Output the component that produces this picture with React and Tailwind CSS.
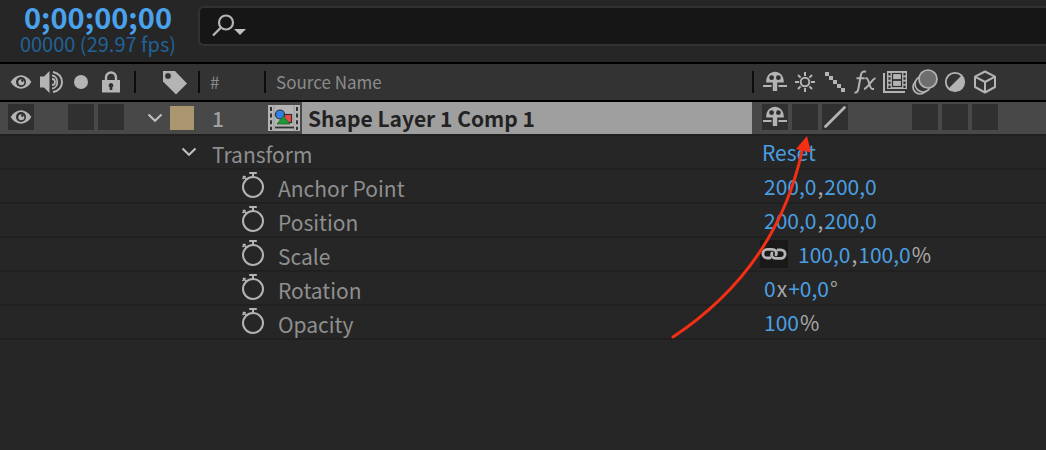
import React from "react";

function Eye() {
  return (
    <svg width="22" height="16" viewBox="0 0 22 16" aria-hidden="true">
      <path d="M0.6 8C6.2-1 15.8-1 21.4 8 15.8 17 6.2 17 0.6 8Z" fill="#b4b4b4" />
      <circle cx="11" cy="8" r="5" fill="#2e2e2e" />
      <circle cx="11.3" cy="8.2" r="3" fill="#b4b4b4" />
      <circle cx="12.4" cy="6.6" r="1.3" fill="#2e2e2e" />
    </svg>
  );
}

function Speaker() {
  return (
    <svg width="24" height="24" viewBox="0 0 24 24" aria-hidden="true">
      <path d="M1 6.5H5L10.5 1V23L5 17.5H1Z" fill="#b4b4b4" />
      <path d="M13 9A3 3 0 0 1 13 15" fill="none" stroke="#b4b4b4" strokeWidth="1.8" />
      <path d="M13 5.5C20 6 20 18 13 18.5" fill="none" stroke="#b4b4b4" strokeWidth="1.8" />
      <path d="M14 2C26 4 26 20 14 22" fill="none" stroke="#b4b4b4" strokeWidth="2" />
    </svg>
  );
}

function Lock() {
  return (
    <svg width="20" height="22" viewBox="0 0 20 22" aria-hidden="true">
      <path d="M5 10V6.5a5 5 0 0 1 10 0V10" fill="none" stroke="#b4b4b4" strokeWidth="2.4" />
      <rect x="1" y="9" width="18" height="12.5" fill="#b4b4b4" />
      <path d="M10 12a2.4 2.4 0 0 1 1.3 4.4V19H8.7V16.4A2.4 2.4 0 0 1 10 12Z" fill="#303030" />
    </svg>
  );
}

function Tag() {
  return (
    <svg width="26" height="25" viewBox="0 0 26 25" aria-hidden="true">
      <path d="M1 1H13L25 13.5 14 24.5 1 11.5Z" fill="#b4b4b4" />
      <circle cx="6" cy="6" r="3" fill="#333" stroke="#777" strokeWidth="0.6" />
    </svg>
  );
}

function Shy() {
  return (
    <svg width="24" height="22" viewBox="0 0 24 22" aria-hidden="true">
      <path d="M3.2 11.5C2.7-2.8 21.3-2.8 20.8 11.5H14.2V20H9.8V11.5Z" fill="#b4b4b4" />
      <circle cx="8.6" cy="6.7" r="2.4" fill="#2e2e2e" />
      <circle cx="15.4" cy="6.7" r="2.4" fill="#2e2e2e" />
      <path d="M0 15H8.5M15.5 15H24" stroke="#b4b4b4" strokeWidth="2" />
    </svg>
  );
}

function Sun() {
  return (
    <svg width="20" height="20" viewBox="0 0 20 20" fill="none" stroke="#b4b4b4" strokeWidth="2" aria-hidden="true">
      <circle cx="10" cy="10" r="4.3" />
      <path d="M10 0V4M10 16V20M0 10H4M16 10H20M3 3L5.6 5.6M14.4 14.4L17 17M17 3L14.4 5.6M5.6 14.4L3 17" />
    </svg>
  );
}

function Steps() {
  return (
    <svg width="20" height="20" viewBox="0 0 20 20" fill="#b4b4b4" aria-hidden="true">
      <path d="M0 0h4v4H0zM4 4h4v4H4zM8 8h4v4H8zM12 12h4v4h-4zM16 16h4v4h-4z" />
    </svg>
  );
}

function Fx() {
  return (
    <svg width="22" height="24" viewBox="0 0 22 24" fill="none" stroke="#b4b4b4" strokeWidth="2" aria-hidden="true">
      <path d="M0.5 22.4C3 23.2 4 21 4.5 18L6.8 5.5C7.4 2 9 0.9 12 1.7" />
      <path d="M2.5 8.3H10.7M11.3 8.3H12.5C15 8.3 15.3 19 18.3 19H20M21.5 8.3C18 8.8 14 18.2 10 19" />
    </svg>
  );
}

function Frames() {
  return (
    <svg width="24" height="22" viewBox="0 0 24 22" aria-hidden="true">
      <path d="M1 2V21H22" fill="none" stroke="#b4b4b4" strokeWidth="2" />
      <rect x="4" y="0" width="20" height="18" fill="#b4b4b4" />
      <path d="M6.5 2V17M21.5 2V17" stroke="#303030" strokeWidth="2.2" strokeDasharray="2.5 1.7" />
      <rect x="9.5" y="2.5" width="9" height="13" fill="none" stroke="#303030" strokeWidth="1.2" />
      <path d="M10 9H18" stroke="#303030" strokeWidth="1.8" />
    </svg>
  );
}

function MotionBlur() {
  return (
    <svg width="26" height="26" viewBox="0 0 26 26" stroke="#b4b4b4" strokeWidth="1.7" aria-hidden="true">
      <circle cx="8" cy="18" r="7" fill="#333" />
      <circle cx="11" cy="15" r="8" fill="#333" />
      <circle cx="16" cy="10" r="9" fill="#6e6e6e" />
    </svg>
  );
}

function Adjustment() {
  return (
    <svg width="22" height="22" viewBox="0 0 22 22" aria-hidden="true">
      <circle cx="11" cy="11" r="9.2" fill="none" stroke="#b4b4b4" strokeWidth="1.8" />
      <path d="M17.5 4.5A9.2 9.2 0 0 1 4.5 17.5Z" fill="#b4b4b4" />
    </svg>
  );
}

function Cube() {
  return (
    <svg width="24" height="24" viewBox="0 0 24 24" fill="none" stroke="#b4b4b4" strokeWidth="2" strokeLinejoin="round" aria-hidden="true">
      <path d="M12 1.5L22 6.7V17L12 22.5 2 17V6.7Z" />
      <path d="M2 6.7L12 12 22 6.7M12 12V22.5" />
    </svg>
  );
}

function Slash() {
  return (
    <svg width="24" height="24" viewBox="0 0 24 24" aria-hidden="true">
      <path d="M2.5 21.5L21.5 2.5" stroke="#b4b4b4" strokeWidth="2.8" strokeLinecap="round" />
    </svg>
  );
}

function Chevron() {
  return (
    <svg width="16" height="10" viewBox="0 0 16 10" aria-hidden="true">
      <path d="M1.5 1.5L8 7.8 14.5 1.5" fill="none" stroke="#c0c0c0" strokeWidth="2" />
    </svg>
  );
}

function CompIcon() {
  return (
    <svg width="32" height="26" viewBox="0 0 32 26" aria-hidden="true">
      <rect width="32" height="26" fill="#b4b4b4" />
      <path d="M3 2V25M29 2V25" stroke="#333" strokeWidth="2" strokeDasharray="4 2.6" />
      <rect x="5.5" y="0" width="1" height="26" fill="#999" />
      <rect x="25.5" y="0" width="1" height="26" fill="#999" />
      <rect x="15" y="9.5" width="8.5" height="8" fill="#f04848" stroke="#303030" strokeWidth="1.2" />
      <circle cx="12" cy="9.5" r="4.5" fill="#2f80e8" stroke="#303030" strokeWidth="1.2" />
      <path d="M15.5 11L22 19H9Z" fill="#1d9a32" stroke="#2c5c30" strokeWidth="0.8" />
      <path d="M7 22.5H26" stroke="#333" strokeWidth="1.8" />
    </svg>
  );
}

function Stopwatch() {
  return (
    <svg width="24" height="28" viewBox="0 0 24 28" fill="none" stroke="#b4b4b4" strokeWidth="2" aria-hidden="true">
      <circle cx="12" cy="16" r="10" />
      <path d="M8.2 2H15.8M12 2V6" />
      <path d="M1.5 8L4.5 5M2 5L5.5 8.5" strokeWidth="1.7" />
    </svg>
  );
}

function ChainLink() {
  return (
    <svg width="26" height="14" viewBox="0 0 26 14" fill="none" stroke="#b4b4b4" strokeWidth="2.8" strokeLinecap="round" aria-hidden="true">
      <path d="M9 11H6.2A4.3 4.3 0 0 1 6.2 2.4H11C14.5 2.4 16.2 5.2 15 7.8" />
      <path d="M17 2.8H19.8A4.3 4.3 0 0 1 19.8 11.4H15C11.5 11.4 9.8 8.6 11 6" />
    </svg>
  );
}

function SearchIcon() {
  return (
    <svg width="36" height="24" viewBox="0 0 36 24" aria-hidden="true">
      <circle cx="15" cy="8.5" r="7" fill="none" stroke="#b4b4b4" strokeWidth="2.2" />
      <path d="M10 13.5L2 21.5" stroke="#b4b4b4" strokeWidth="2.4" />
      <path d="M23 15H35L29 21Z" fill="#c0c0c0" />
    </svg>
  );
}

const avColumns = [
  { label: "Video", icon: <Eye /> },
  { label: "Audio", icon: <Speaker /> },
  { label: "Solo", icon: <span className="size-3.5 rounded-full bg-[#b4b4b4]" /> },
  { label: "Lock", icon: <Lock /> },
];

const switchColumns = [
  { label: "Shy", icon: <Shy /> },
  { label: "Collapse transformations", icon: <Sun /> },
  { label: "Quality", icon: <Steps /> },
  { label: "Effects", icon: <Fx /> },
  { label: "Frame blending", icon: <Frames /> },
  { label: "Motion blur", icon: <MotionBlur /> },
  { label: "Adjustment layer", icon: <Adjustment /> },
  { label: "3D layer", icon: <Cube /> },
];

const avCells = [
  { label: "Toggle video", icon: <Eye /> },
  null,
  { label: "Toggle solo" },
  { label: "Toggle lock" },
];

const switchCells = [
  { label: "Toggle shy", icon: <Shy /> },
  { label: "Toggle collapse transformations" },
  { label: "Toggle quality", icon: <Slash /> },
  null,
  null,
  { label: "Toggle motion blur" },
  { label: "Toggle adjustment layer" },
  { label: "Toggle 3D layer" },
];

function HeaderIcons({ items }) {
  return (
    <div className="flex gap-1">
      {items.map((item) => (
        <span key={item.label} role="img" aria-label={item.label} className="flex size-[26px] items-center justify-center">
          <span className="flex shrink-0">{item.icon}</span>
        </span>
      ))}
    </div>
  );
}

function ToggleCells({ items }) {
  return (
    <div className="flex gap-1 pb-0.5">
      {items.map((item, i) =>
        item ? (
          <button key={i} type="button" aria-label={item.label} className="flex size-[26px] items-center justify-center bg-[#303030]">
            {item.icon}
          </button>
        ) : (
          <span key={i} className="size-[26px]" />
        )
      )}
    </div>
  );
}

function Divider() {
  return <span className="h-[22px] w-0.5 shrink-0 bg-[#0c0c0c]" />;
}

function Value({ children }) {
  return (
    <button type="button" className="text-[#4a9fe3]">
      {children}
    </button>
  );
}

function Unit({ children }) {
  return <span className="px-px text-[#a8a8a8]">{children}</span>;
}

const properties = [
  { name: "Anchor Point", value: <><Value>200,0</Value><Unit>,</Unit><Value>200,0</Value></> },
  { name: "Position", value: <><Value>200,0</Value><Unit>,</Unit><Value>200,0</Value></> },
  { name: "Scale", linked: true, value: <><Value>100,0</Value><Unit>,</Unit><Value>100,0</Value><Unit>%</Unit></> },
  { name: "Rotation", value: <><Value>0</Value><Unit>x</Unit><Value>+0,0</Value><Unit>°</Unit></> },
  { name: "Opacity", value: <><Value>100</Value><Unit>%</Unit></> },
];

function PropertyRow({ name, value, linked }) {
  return (
    <div className="flex h-[34px] items-center border-b-2 border-[#202020]">
      <div className="flex min-w-0 flex-1 items-center pl-[241px]">
        <button type="button" aria-label={"Animate " + name} className="mb-0.5 shrink-0">
          <Stopwatch />
        </button>
        <span className="pt-1 pl-[13px] text-[#8f8f8f]">{name}</span>
      </div>
      <div className="flex w-[286px] shrink-0 items-center">
        {linked ? (
          <button type="button" aria-label="Constrain proportions" className="mr-2.5 flex h-7 w-7 items-center justify-center bg-[#191919]">
            <ChainLink />
          </button>
        ) : (
          <span className="w-1" />
        )}
        <span className="flex">{value}</span>
      </div>
    </div>
  );
}

export default function App() {
  return (
    <main className="relative min-h-screen overflow-hidden bg-[#262626] font-['Noto_Sans_CJK_SC','Noto_Sans',sans-serif] text-[21px] leading-7">
      <header className="flex h-[62px] items-start">
        <div className="flex w-[198px] shrink-0 flex-col items-center pr-0.5">
          <button type="button" className="text-[29px] leading-8 font-bold text-[#4aa2ec]">0;00;00;00</button>
          <span className="text-xl leading-6 text-[#226296]">00000 (29.97 fps)</span>
        </div>
        <div className="mt-1.5 flex h-10 min-w-0 flex-1 items-center rounded-l-md border-2 border-r-0 border-[#323232] bg-[#161616] pl-[11px]">
          <button type="button" aria-label="Search options" className="shrink-0">
            <SearchIcon />
          </button>
          <input type="text" aria-label="Search layers" className="min-w-0 flex-1 bg-transparent px-2 text-[#b4b4b4] outline-none" />
        </div>
      </header>

      <div className="flex h-10 items-center border-y-2 border-black bg-[#333333] text-[17px] text-[#8c8c8c]">
        <div className="flex w-[134px] shrink-0 pl-2">
          <HeaderIcons items={avColumns} />
        </div>
        <Divider />
        <div className="flex w-[62px] shrink-0 justify-end pr-2.5">
          <Tag />
        </div>
        <Divider />
        <span className="w-16 shrink-0 pl-2.5">#</span>
        <Divider />
        <span className="min-w-0 flex-1 pl-2.5">Source Name</span>
        <Divider />
        <div className="w-[292px] shrink-0 pl-2">
          <HeaderIcons items={switchColumns} />
        </div>
      </div>

      <div className="flex h-8 items-center bg-[#484848]">
        <div className="w-[147px] shrink-0 pl-2">
          <ToggleCells items={avCells} />
        </div>
        <button type="button" aria-label="Collapse layer" className="mr-[7px] shrink-0">
          <Chevron />
        </button>
        <button type="button" aria-label="Label colour" className="size-6 shrink-0 bg-[#ab9670]" />
        <span className="w-[74px] shrink-0 pl-[18px] font-medium text-[#a0a0a0]">1</span>
        <CompIcon />
        <span className="ml-0.5 flex h-8 min-w-0 flex-1 items-center bg-[#9f9f9f] pl-1.5 font-bold text-[#222222]">
          Shape Layer 1 Comp 1
        </span>
        <div className="w-[294px] shrink-0 pl-2.5">
          <ToggleCells items={switchCells} />
        </div>
      </div>

      <section aria-label="Transform">
        <div className="flex h-9 items-center border-y-2 border-[#202020]">
          <div className="flex min-w-0 flex-1 items-center pl-[181px]">
            <button type="button" aria-label="Collapse transform" className="shrink-0">
              <Chevron />
            </button>
            <span className="pt-1 pl-[15px] text-[#8f8f8f]">Transform</span>
          </div>
          <div className="w-[284px] shrink-0">
            <Value>Reset</Value>
          </div>
        </div>
        {properties.map((p) => (
          <PropertyRow key={p.name} {...p} />
        ))}
      </section>

      <svg className="pointer-events-none absolute top-[130px] right-[230px]" width="150" height="215" viewBox="666 130 150 215" aria-hidden="true">
        <path d="M673 337Q777 268 802.5 149" fill="none" stroke="#f42f13" strokeWidth="3" strokeLinecap="round" />
        <path d="M807 136L811 152.500 796 149Z" fill="#f42f13" />
      </svg>
    </main>
  );
}
